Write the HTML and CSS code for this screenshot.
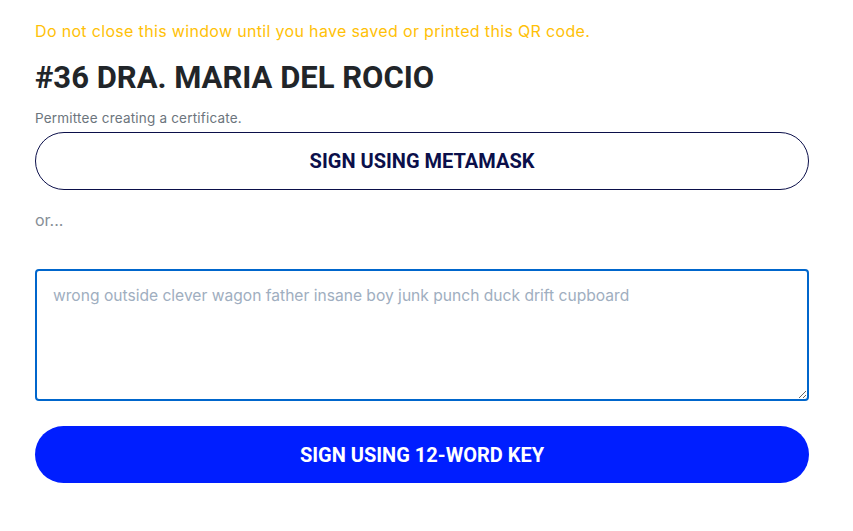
FILE: index.html
```html
<!DOCTYPE html>
<html lang="en">
<head>
    <meta charset="UTF-8">
    <meta name="viewport" content="width=device-width, initial-scale=1.0">
    <title>Sign Certificate</title>
    <link rel="stylesheet" href="styles.css">
</head>
<body>
    <div class="container">
        <p class="warning">Do not close this window until you have saved or printed this QR code.</p>

        <h1 class="title">#36 DRA. MARIA DEL ROCIO</h1>
        <div class="subtitle">Permittee creating a certificate.</div>

        <button class="btn btn-outline">SIGN USING METAMASK</button>

        <p class="or">or...</p>

        <textarea class="mnemonic" placeholder="wrong outside clever wagon father insane boy junk punch duck drift cupboard"></textarea>

        <button class="btn btn-primary">SIGN USING 12-WORD KEY</button>
    </div>
</body>
</html>
```

FILE: styles.css
```css
body {
    margin: 0;
    padding: 0;
    background-color: #fff;
    font-family: Inter, "Noto Sans", sans-serif;
    color: #212529;
}

.container {
    padding: 20px 44px 0 35px;
    display: flex;
    flex-direction: column;
}

.warning {
    color: #ffc107;
    font-size: 16px;
    letter-spacing: 0.33px;
    line-height: 22px;
    margin: 0 0 18px 0;
}

.title {
    font-family: Roboto, sans-serif;
    font-weight: 700;
    font-size: 31px;
    line-height: 36px;
    margin: 0 0 14px 0;
    color: #212529;
}

.subtitle {
    font-size: 13.5px;
    letter-spacing: 0.2px;
    color: #6c757d;
    line-height: 16px;
    margin-bottom: 6px;
}

.btn {
    font-family: Roboto, sans-serif;
    font-weight: 700;
    font-size: 20px;
    border-radius: 29px;
    height: 58px;
    width: 100%;
    cursor: pointer;
}

.btn-outline {
    background: #fff;
    border: 1px solid #0b0f4a;
    color: #0b0f4a;
}

.btn-primary {
    background: #001eff;
    border: none;
    color: #fff;
    height: 57px;
}

.or {
    color: #868e96;
    font-size: 16px;
    line-height: 20px;
    margin: 20px 0 39px 0;
}

.mnemonic {
    font-family: Inter, "Noto Sans", sans-serif;
    font-size: 15.6px;
    line-height: 22px;
    height: 132px;
    box-sizing: border-box;
    border: 2px solid #0066cc;
    border-radius: 4px;
    padding: 14px 16px;
    margin-bottom: 25px;
    resize: vertical;
    outline: none;
}

.mnemonic::placeholder {
    color: #a0aec0;
}
```
